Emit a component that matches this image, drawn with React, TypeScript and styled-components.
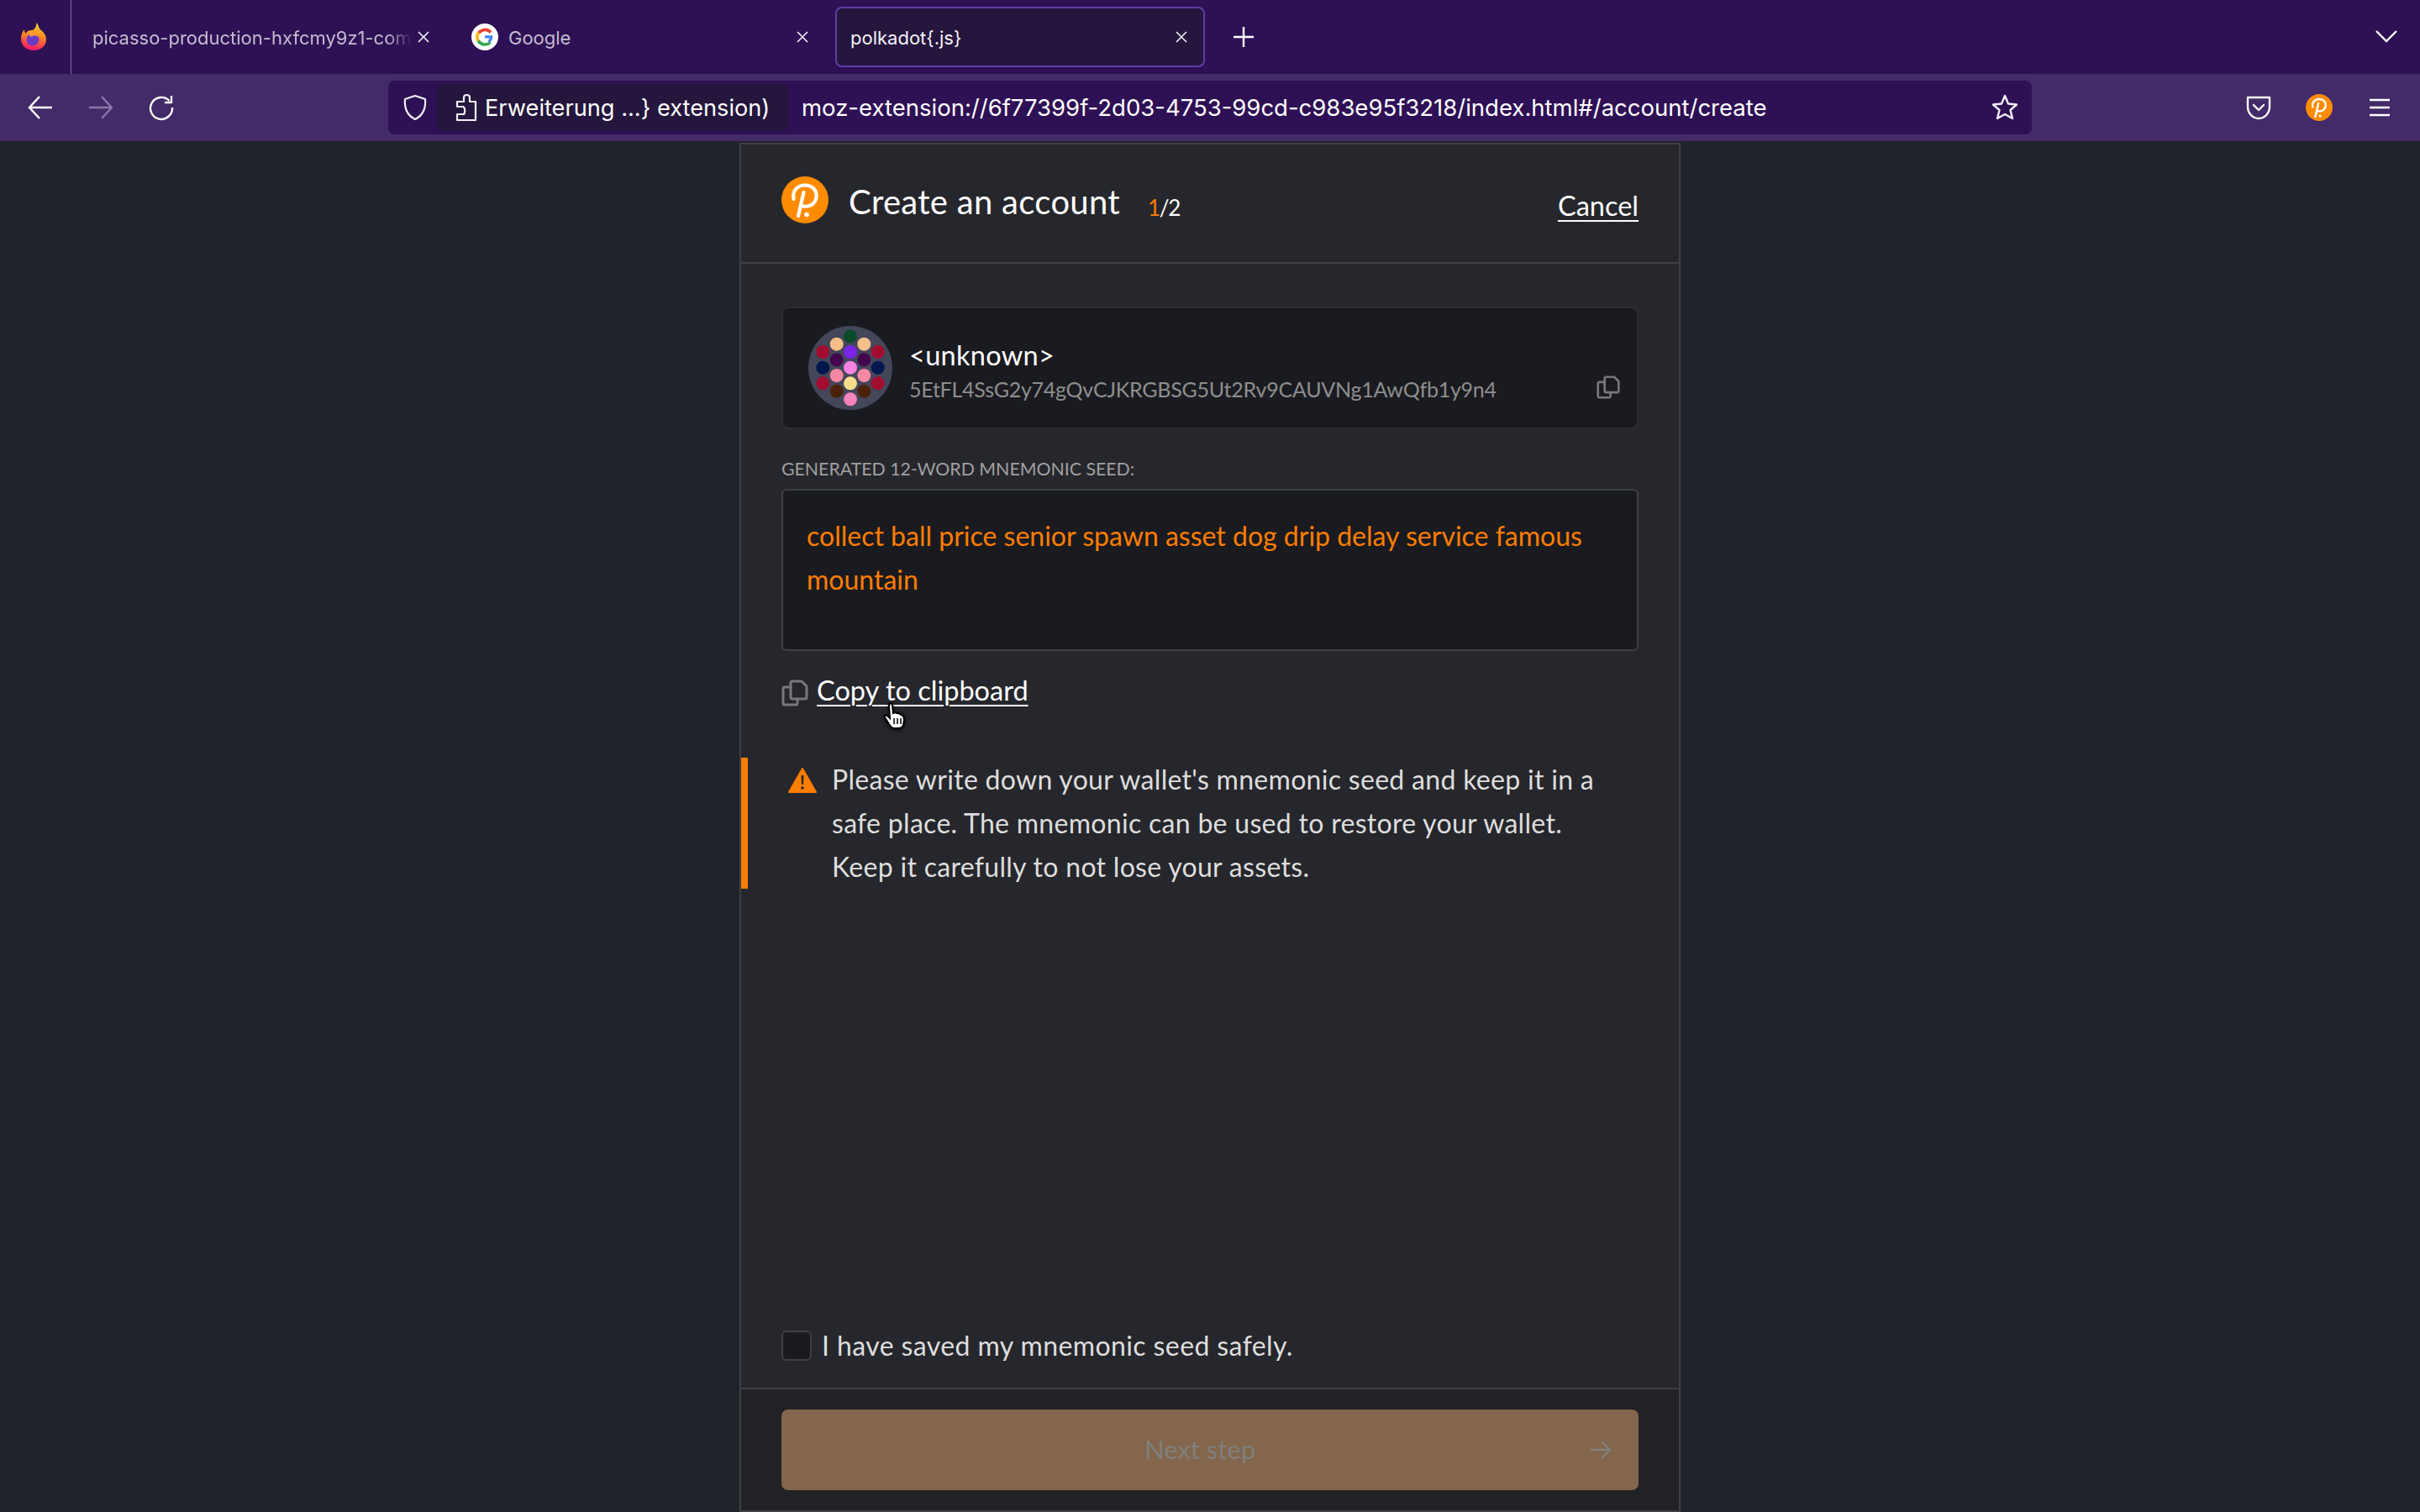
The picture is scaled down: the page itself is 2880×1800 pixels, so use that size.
import React from "react";
import styled, { createGlobalStyle } from "styled-components";

const Global = createGlobalStyle`
  html, body { margin: 0; padding: 0; height: 100%; background: #20232a; }
  #root { height: 100%; }
  * { box-sizing: border-box; }
`;

const UI = `"Inter", "Liberation Sans", sans-serif`;
const APP = `"Lato", "Open Sans", sans-serif`;

const Screen = styled.div`
  width: 2880px;
  height: 1800px;
  display: flex;
  flex-direction: column;
  overflow: hidden;
  position: relative;
  background: #20232a;
`;

const TabStrip = styled.div`
  height: 88px;
  flex: none;
  display: flex;
  align-items: center;
  background: #2e1155;
  font-family: ${UI};
`;

const AppMenu = styled.div`
  width: 85px;
  height: 88px;
  flex: none;
  display: flex;
  align-items: center;
  padding-left: 24px;
  border-right: 1px solid #7b6698;
`;

const Tabs = styled.div`
  display: flex;
  align-items: center;
  gap: 11px;
  padding-left: 7px;
`;

const Tab = styled.div<{ $active?: boolean }>`
  width: 440px;
  height: 72px;
  display: flex;
  align-items: center;
  padding: 0 18px 0 16px;
  border-radius: 8px;
  border: 2px solid ${(p) => (p.$active ? "#5f3ea6" : "transparent")};
  background: ${(p) => (p.$active ? "#24163c" : "transparent")};
  color: ${(p) => (p.$active ? "#f4f2f7" : "#c4bcd0")};
  font-size: 22px;
  font-weight: 400;
`;

const TabLabel = styled.span<{ $fade?: boolean }>`
  flex: 1;
  min-width: 0;
  margin-top: 2px;
  white-space: nowrap;
  ${(p) => p.$fade && `-webkit-mask-image: linear-gradient(90deg, #000 92%, transparent 100%);`}
`;

const Favicon = styled.svg`
  width: 32px;
  height: 32px;
  flex: none;
  margin-right: 12px;
`;

const TabClose = styled.svg`
  width: 16px;
  height: 16px;
  flex: none;
  margin-left: 6px;
`;

const NewTab = styled.svg`
  width: 26px;
  height: 26px;
  flex: none;
  margin-left: 33px;
`;

const AllTabs = styled.svg`
  width: 28px;
  height: 18px;
  margin-left: auto;
  margin-right: 26px;
  margin-bottom: 2px;
  flex: none;
`;

const Toolbar = styled.div`
  height: 80px;
  flex: none;
  display: flex;
  align-items: center;
  background: #432a68;
  font-family: ${UI};
  padding-left: 32px;
`;

const NavIcon = styled.svg`
  width: 32px;
  height: 32px;
  flex: none;
  margin-right: 40px;
`;

const UrlBar = styled.div`
  width: 1956px;
  height: 64px;
  margin-left: 214px;
  flex: none;
  display: flex;
  align-items: center;
  border-radius: 8px;
  background: #2e1155;
  padding: 0 15px 0 17px;
  color: #ffffff;
  font-size: 27.5px;
`;

const Identity = styled.div`
  width: 418px;
  height: 56px;
  margin-left: 11px;
  margin-right: 16px;
  flex: none;
  display: flex;
  align-items: center;
  gap: 7px;
  padding-left: 22px;
  border-radius: 8px;
  background: #24163c;
  white-space: nowrap;
  font-size: 27.2px;
`;

const Url = styled.div`
  flex: 1;
  white-space: nowrap;
`;

const ToolGroup = styled.div`
  flex: none;
  display: flex;
  align-items: center;
  gap: 40px;
  margin-left: 254px;
`;

const ToolIcon = styled.svg`
  width: 32px;
  height: 32px;
  flex: none;
`;

const Page = styled.main`
  flex: 1;
  min-height: 0;
  padding-top: 2px;
  display: flex;
  justify-content: center;
`;

const Panel = styled.section`
  width: 1120px;
  display: flex;
  flex-direction: column;
  background: #26272c;
  border: 2px solid #3e4046;
  font-family: ${APP};
  color: #fff;
`;

const Header = styled.header`
  height: 142px;
  flex: none;
  display: flex;
  align-items: center;
  padding: 0 48px;
  border-bottom: 2px solid #3e4046;
`;

const HeaderLogo = styled.svg`
  width: 56px;
  height: 56px;
  flex: none;
  margin-right: 24px;
  margin-bottom: 8px;
`;

const Title = styled.h1`
  margin: 0 0 4px 0;
  font-size: 40px;
  font-weight: 400;
  line-height: 52px;
  letter-spacing: 0.3px;
`;

const Step = styled.div`
  margin-left: 33px;
  margin-top: 10px;
  font-size: 26px;
  line-height: 36px;
  letter-spacing: -1.3px;
`;

const StepCurrent = styled.span`
  color: #ff7d00;
`;

const Cancel = styled.a`
  margin-left: auto;
  margin-top: 6px;
  font-size: 32.5px;
  line-height: 40px;
  color: #fff;
  text-decoration: underline;
  text-decoration-thickness: 2px;
  text-underline-offset: 5px;
`;

const Content = styled.div`
  flex: 1;
  min-height: 0;
  display: flex;
  flex-direction: column;
  padding: 51px 48px 32px;
`;

const AccountCard = styled.div`
  height: 146px;
  flex: none;
  display: flex;
  align-items: center;
  border: 2px solid #2d2e33;
  border-radius: 8px;
  background: #1a1b20;
  padding: 0 20px 0 30px;
`;

const Identicon = styled.svg`
  width: 100px;
  height: 100px;
  flex: none;
  margin-right: 20px;
`;

const AccountText = styled.div`
  flex: 1;
  min-width: 0;
  margin-top: 10px;
`;

const AccountName = styled.div`
  font-size: 32.5px;
  line-height: 40px;
  letter-spacing: 0.3px;
`;

const Address = styled.div`
  font-size: 25px;
  line-height: 40px;
  letter-spacing: -0.25px;
  color: #8e8e8e;
`;

const CopyIcon = styled.svg<{ $size: number }>`
  width: ${(p) => p.$size}px;
  height: ${(p) => p.$size}px;
  flex: none;
  margin-bottom: 1px;
`;

const CardCopy = styled.div`
  align-self: flex-end;
  padding-bottom: 33px;
  display: flex;
`;

const FieldLabel = styled.label`
  margin-top: 33px;
  font-size: 21.3px;
  line-height: 28px;
  color: #a0a0a0;
  text-transform: uppercase;
`;

const SeedBox = styled.div`
  margin-top: 10px;
  height: 193px;
  flex: none;
  border: 2px solid #3e4046;
  border-radius: 6px;
  background: #1a1b20;
  padding: 28px 28px;
  font-size: 32px;
  line-height: 52px;
  color: #ff7d00;
`;

const CopyRow = styled.div`
  position: relative;
  margin-top: 27px;
  height: 40px;
  display: flex;
  align-items: flex-end;
  gap: 10px;
`;

const CopyLink = styled.a`
  font-size: 32.5px;
  line-height: 40px;
  color: #fff;
  text-decoration: underline;
  text-decoration-thickness: 2px;
  text-underline-offset: 5px;
`;

const Cursor = styled.svg`
  position: absolute;
  left: 120px;
  top: 34px;
  width: 30px;
  height: 34px;
  filter: drop-shadow(0 1px 2px rgba(0, 0, 0, 0.9));
`;

const Warning = styled.div`
  margin: 60px 0 0 -48px;
  height: 156px;
  flex: none;
  display: flex;
  border-left: 8px solid #ff7d00;
  padding-left: 48px;
`;

const WarningIcon = styled.svg`
  width: 34px;
  height: 32px;
  flex: none;
  margin: 11px 18px 0 0;
`;

const WarningText = styled.p`
  margin: 0;
  font-size: 32px;
  line-height: 52px;
  letter-spacing: 0.3px;
  color: #dedede;
  white-space: nowrap;
`;

const SavedRow = styled.label`
  margin-top: auto;
  display: flex;
  align-items: center;
  gap: 12px;
  font-size: 32px;
  line-height: 36px;
  letter-spacing: 0.4px;
  color: #dedede;
`;

const Check = styled.span`
  width: 36px;
  height: 36px;
  flex: none;
  border: 2px solid #3e4046;
  border-radius: 6px;
  background: #1a1b20;
`;

const Footer = styled.footer`
  height: 146px;
  flex: none;
  border-top: 2px solid #3e4046;
  background: #212226;
  padding: 24px 48px 0;
`;

const NextButton = styled.div`
  position: relative;
  height: 96px;
  display: flex;
  align-items: center;
  justify-content: center;
  padding: 0 24px 2px 0;
  border-radius: 8px;
  background: #83664b;
  color: #80807e;
  font-size: 31px;
`;

const NextArrow = styled.svg`
  position: absolute;
  right: 32px;
  top: 36px;
  width: 26px;
  height: 24px;
`;

const PolkadotMark = () => (
  <>
    <circle cx="28" cy="28" r="28" fill="#ff8c00" />
    <path d="M14.5 27C12.5 16 20 10.5 28 10.5 36.5 10.5 42.5 16.500 41.500 24.500 40.500 33 33 37 25.500 35.500" fill="none" stroke="#fff" strokeWidth="4.200" strokeLinecap="round" />
    <path d="M26.500 19 20 47" fill="none" stroke="#fff" strokeWidth="4.200" strokeLinecap="round" />
    <circle cx="30" cy="45.500" r="2.800" fill="#fff" />
  </>
);

const CopyGlyph = ({ size, color }: { size: number; color: string }) => (
  <CopyIcon $size={size} viewBox="0 0 32 32" fill="none" stroke={color} strokeWidth="3" strokeLinejoin="round" strokeLinecap="round">
    <path d="M13 2H24L30 8V21Q30 23 28 23H13Q11 23 11 21V4Q11 2 13 2Z" />
    <path d="M11 9H4Q2 9 2 11V28Q2 30 4 30H17Q19 30 19 28V23" />
  </CopyIcon>
);

const dots: [number, number, string][] = [
  [50, 12.300, "#0b4a2a"], [33.700, 21.700, "#f6bf8a"], [66.300, 21.700, "#f6bf8a"],
  [17.300, 31, "#a30d30"], [50, 31, "#7b25e8"], [82.700, 31, "#a30d30"],
  [33.700, 40.300, "#42074e"], [66.300, 40.300, "#42074e"],
  [17.300, 49.700, "#03174f"], [50, 49.700, "#f583e3"], [82.700, 49.700, "#03174f"],
  [33.700, 59, "#f588a3"], [66.300, 59, "#f588a3"],
  [17.300, 68.300, "#a30d30"], [50, 68.300, "#f5de8b"], [82.700, 68.300, "#a30d30"],
  [33.700, 77.700, "#4b2209"], [66.300, 77.700, "#4b2209"], [50, 87.300, "#f584bd"],
];

export default function App() {
  return (
    <Screen>
      <Global />
      <TabStrip>
        <AppMenu>
          <svg width="32" height="34" viewBox="0 0 32 34">
            <defs>
              <linearGradient id="ff" x1="0.6" y1="0" x2="0.4" y2="1">
                <stop offset="0" stopColor="#ffd53a" />
                <stop offset="0.45" stopColor="#ff8a1f" />
                <stop offset="1" stopColor="#f0146c" />
              </linearGradient>
            </defs>
            <path d="M19 0C23 3 21 6 25 9 30 13 31 17 31 20 31 28 24 33 16 33 8 33 1 28 1 19 1 15 2 11 5 8 5 11 6 12 7 13 8 9 12 9 15 9 18 7 20 4 19 0Z" fill="url(#ff)" />
            <circle cx="15" cy="20" r="7.500" fill="#6a3bc8" />
            <path d="M9 13C13 11 20 12 22 17 19 15 15 15 13 17Z" fill="#ff9a3a" />
          </svg>
        </AppMenu>
        <Tabs>
          <Tab>
            <TabLabel $fade>picasso-production-hxfcmy9z1-com</TabLabel>
            <TabClose viewBox="0 0 16 16"><path d="M2 2 14 14M14 2 2 14" stroke="#f1eef5" strokeWidth="1.600" /></TabClose>
          </Tab>
          <Tab>
            <Favicon viewBox="0 0 32 32">
              <circle cx="16" cy="16" r="16" fill="#fff" />
              <path d="M23 10.500A9.200 9.200 0 0 0 8.500 11.500" fill="none" stroke="#ea4335" strokeWidth="3.600" />
              <path d="M8.600 10.800A9.200 9.200 0 0 0 8.600 21.200" fill="none" stroke="#fbbc05" strokeWidth="3.600" />
              <path d="M8.300 20.500A9.200 9.200 0 0 0 22.500 22.500" fill="none" stroke="#34a853" strokeWidth="3.600" />
              <path d="M16 14.300H25.200C25.500 17.500 24.500 20.800 22 23L19.500 20.600C20.700 19.700 21.300 18.600 21.500 17.600H16Z" fill="#4285f4" />
            </Favicon>
            <TabLabel>Google</TabLabel>
            <TabClose viewBox="0 0 16 16"><path d="M2 2 14 14M14 2 2 14" stroke="#f1eef5" strokeWidth="1.600" /></TabClose>
          </Tab>
          <Tab $active>
            <TabLabel>polkadot{"{.js}"}</TabLabel>
            <TabClose viewBox="0 0 16 16"><path d="M2 2 14 14M14 2 2 14" stroke="#f1eef5" strokeWidth="1.600" /></TabClose>
          </Tab>
        </Tabs>
        <NewTab viewBox="0 0 26 26"><path d="M13 1V25M1 13H25" stroke="#fff" strokeWidth="2.400" /></NewTab>
        <AllTabs viewBox="0 0 28 18" fill="none"><path d="M2 3 14 15 26 3" stroke="#fff" strokeWidth="2.400" /></AllTabs>
      </TabStrip>
      <Toolbar>
        <NavIcon viewBox="0 0 32 32" fill="none" stroke="#fff" strokeWidth="2.400"><path d="M30 16H3M15 3 3 16 15 29" /></NavIcon>
        <NavIcon viewBox="0 0 32 32" fill="none" stroke="#8c75a8" strokeWidth="2.400"><path d="M2 16H29M17 3 29 16 17 29" /></NavIcon>
        <NavIcon viewBox="0 0 32 32" fill="none" stroke="#fff" strokeWidth="2.400"><path d="M25.500 8A13 13 0 1 0 29 16" /><path d="M28 2V10H20" strokeLinejoin="round" /></NavIcon>
        <UrlBar>
          <svg width="30" height="32" viewBox="0 0 30 32" fill="none" stroke="#f1eef5" strokeWidth="2.200" style={{ flex: "none" }}>
            <path d="M15 2 27 6C28 17 25 25 15 30 5 25 2 17 3 6Z" strokeLinejoin="round" />
          </svg>
          <Identity>
            <svg width="28" height="34" viewBox="0 0 28 34" fill="none" stroke="#f1eef5" strokeWidth="2.200" strokeLinejoin="round" style={{ flex: "none" }}>
              <path d="M2 32V25H9C12 25 12 17 9 16H2V10H10V5C10 1 17 1 17 5V10H24V32Z" />
            </svg>
            <span>{"Erweiterung ...} extension)"}</span>
          </Identity>
          <Url>moz-extension://6f77399f-2d03-4753-99cd-c983e95f3218/index.html#/account/create</Url>
          <svg width="34" height="34" viewBox="0 0 34 34" fill="none" stroke="#f1eef5" strokeWidth="2.400" strokeLinejoin="round" style={{ flex: "none" }}>
            <path d="M17 3 21 12.500 31 13.500 23.500 20 26 30 17 25 8 30 10.500 20 3 13.500 13 12.500Z" />
          </svg>
        </UrlBar>
        <ToolGroup>
          <ToolIcon viewBox="0 0 32 32" fill="none" stroke="#fff" strokeWidth="2.400" strokeLinejoin="round">
            <path d="M3 4H29V15C29 23 23 29 16 29 9 29 3 23 3 15Z" />
            <path d="M10 13 16 19 22 13" strokeLinecap="round" />
          </ToolIcon>
          <ToolIcon viewBox="0 0 56 56"><PolkadotMark /></ToolIcon>
          <ToolIcon viewBox="0 0 32 32" stroke="#fff" strokeWidth="2.400"><path d="M4 7H28M4 16H28M4 25H28" /></ToolIcon>
        </ToolGroup>
      </Toolbar>
      <Page>
        <Panel>
          <Header>
            <HeaderLogo viewBox="0 0 56 56"><PolkadotMark /></HeaderLogo>
            <Title>Create an account</Title>
            <Step><StepCurrent>1</StepCurrent>/2</Step>
            <Cancel>Cancel</Cancel>
          </Header>
          <Content>
            <AccountCard>
              <Identicon viewBox="0 0 100 100">
                <circle cx="50" cy="50" r="50" fill="#44465a" />
                {dots.map(([x, y, c], i) => <circle key={i} cx={x} cy={y} r="8" fill={c} />)}
              </Identicon>
              <AccountText>
                <AccountName>{"<unknown>"}</AccountName>
                <Address>5EtFL4SsG2y74gQvCJKRGBSG5Ut2Rv9CAUVNg1AwQfb1y9n4</Address>
              </AccountText>
              <CardCopy><CopyGlyph size={28} color="#77787c" /></CardCopy>
            </AccountCard>
            <FieldLabel>Generated 12-word mnemonic seed:</FieldLabel>
            <SeedBox>collect ball price senior spawn asset dog drip delay service famous mountain</SeedBox>
            <CopyRow>
              <CopyGlyph size={32} color="#77787c" />
              <CopyLink>Copy to clipboard</CopyLink>
              <Cursor viewBox="0 0 30 34">
                <path d="M9 2C11 1 12 2 12 4L13 13 15 12 17 13 19 13 21 14 23 15C25 16 26 18 26 21L25 27C24 30 22 31 19 31H14C11 31 10 29 8 26L3 18C2 16 4 15 6 16L9 19 8 5C8 3 8 2 9 2Z" fill="#fff" stroke="#000" strokeWidth="2" />
                <path d="M14 19V26M18 19V26M22 19V26" stroke="#000" strokeWidth="1.500" />
              </Cursor>
            </CopyRow>
            <Warning>
              <WarningIcon viewBox="0 0 34 32">
                <path d="M17 2 33 30H1Z" fill="#ff7d00" stroke="#ff7d00" strokeWidth="2" strokeLinejoin="round" />
                <path d="M15.500 10H18.500L18 21H16Z" fill="#26272c" />
                <circle cx="17" cy="25" r="1.800" fill="#26272c" />
              </WarningIcon>
              <WarningText>
                Please write down your wallet's mnemonic seed and keep it in a<br />
                safe place. The mnemonic can be used to restore your wallet.<br />
                Keep it carefully to not lose your assets.
              </WarningText>
            </Warning>
            <SavedRow>
              <Check />
              I have saved my mnemonic seed safely.
            </SavedRow>
          </Content>
          <Footer>
            <NextButton>
              Next step
              <NextArrow viewBox="0 0 26 24" fill="none" stroke="#80807e" strokeWidth="2.400"><path d="M1 12H24M14 2 24 12 14 22" /></NextArrow>
            </NextButton>
          </Footer>
        </Panel>
      </Page>
    </Screen>
  );
}
